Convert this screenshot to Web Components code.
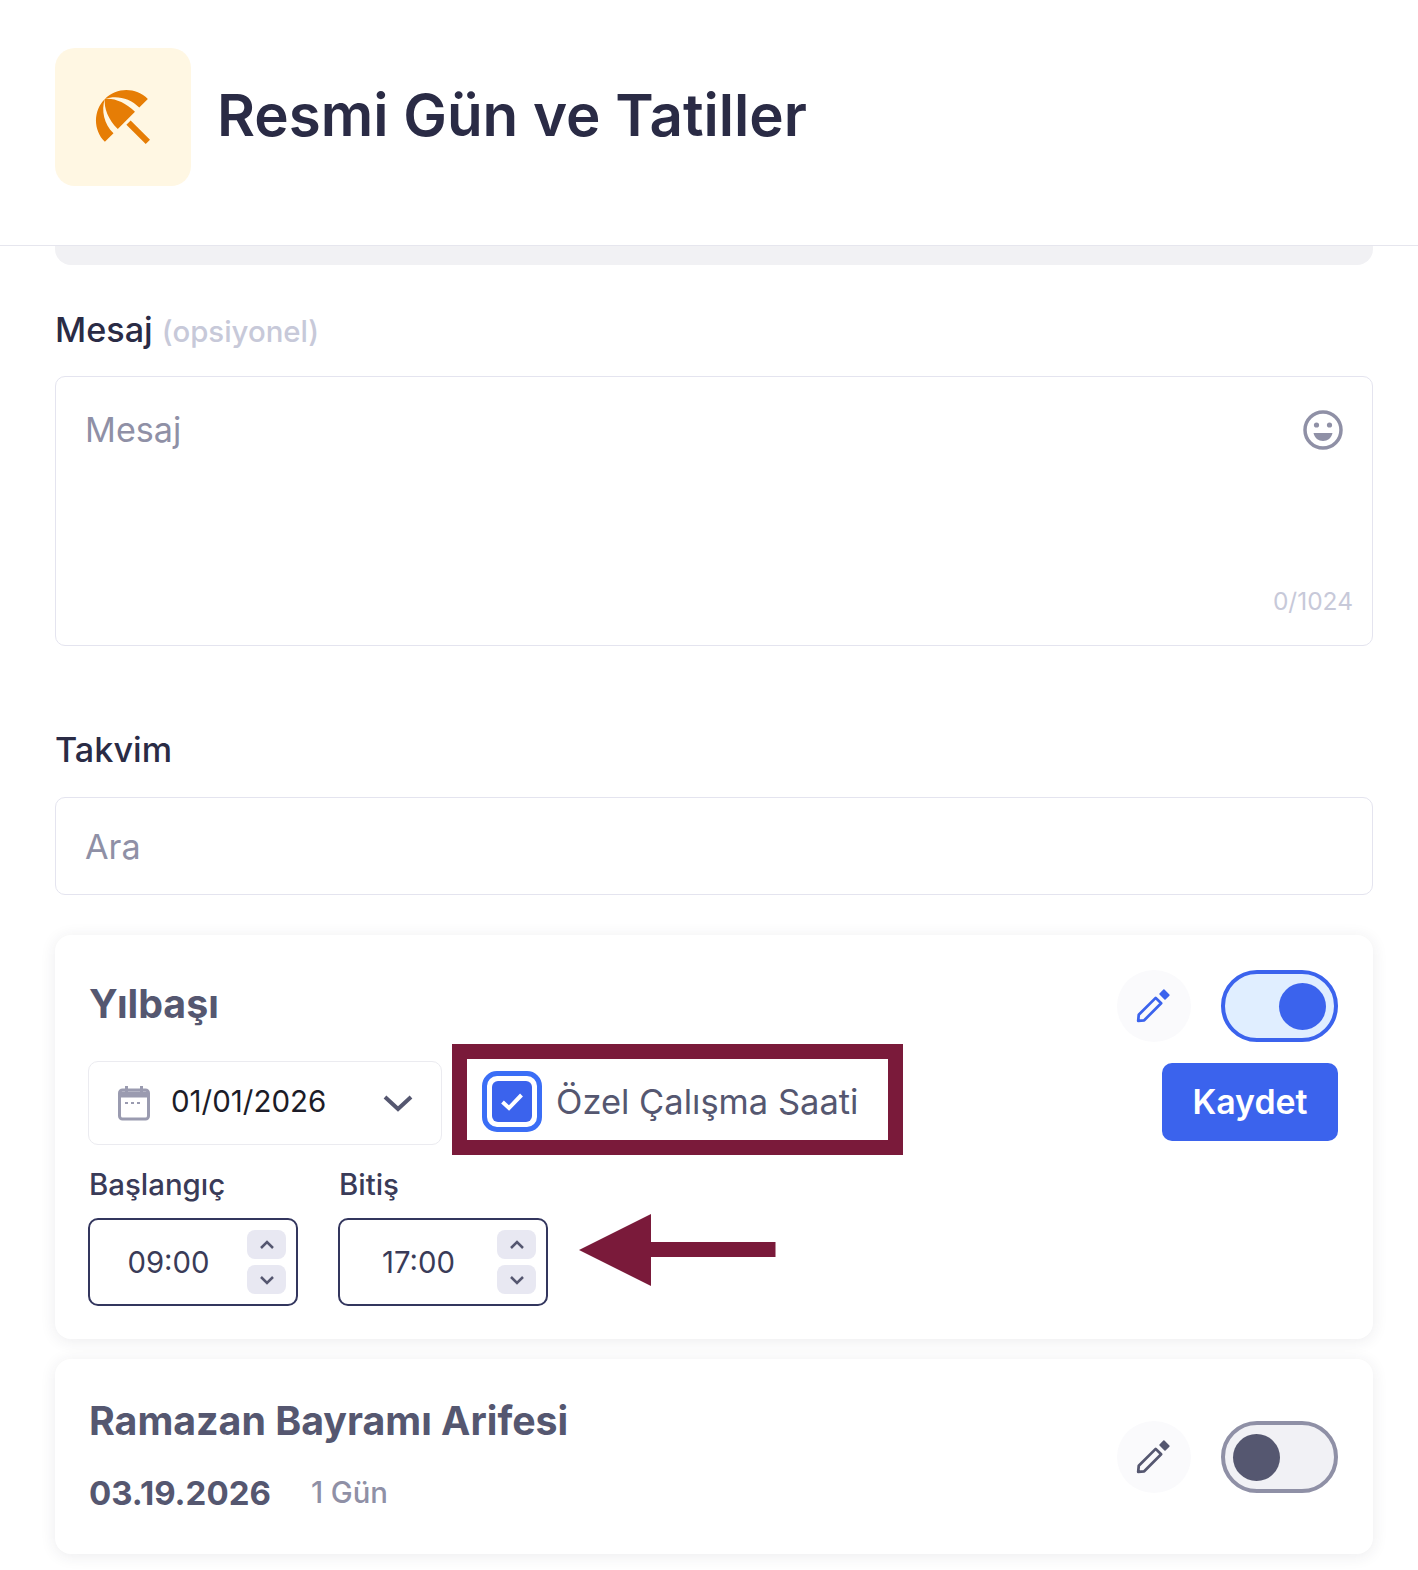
<!DOCTYPE html>
<html lang="tr">
<head>
<meta charset="utf-8">
<title>Resmi Gün ve Tatiller</title>
<style>
  html, body{ margin: 0; background: #fff; }
  body{ font-family: Inter, "Liberation Sans", sans-serif; color: #2a2b45; height: 1570px; overflow: hidden; }
</style>
</head>
<body>
<page-header title="Resmi Gün ve Tatiller"></page-header>
<page-content>
  <text-area-field label="Mesaj" hint="(opsiyonel)" placeholder="Mesaj" counter="0/1024"></text-area-field>
  <search-field label="Takvim" placeholder="Ara"></search-field>
  <holiday-card name="Yılbaşı" active editing>
    <date-select value="01/01/2026" slot="date"></date-select>
    <check-field label="Özel Çalışma Saati" slot="check"></check-field>
    <time-field label="Başlangıç" value="09:00" slot="times"></time-field>
    <time-field label="Bitiş" value="17:00" slot="times"></time-field>
  </holiday-card>
  <holiday-card name="Ramazan Bayramı Arifesi" date="03.19.2026" days="1 Gün"></holiday-card>
</page-content>

<script>
class PageHeader extends HTMLElement{
  constructor(){
    super()
    this.attachShadow({mode: 'open'})
  }

  connectedCallback(){
    this.shadowRoot.innerHTML = `
      <style>
        :host{
          display: flex;
          align-items: flex-start;
          height: 246px;
          padding: 48px 0 0 55px;
          box-sizing: border-box;
          border-bottom: 1px solid #e6e6ee;
        }
        #icon{
          width: 136px;
          height: 138px;
          border-radius: 20px;
          background: #fff7e3;
          display: flex;
          align-items: center;
          justify-content: center;
        }
        h1{
          margin: 32px 0 0 26px;
          font-size: 58.300px;
          line-height: 70px;
          font-weight: 600;
          color: #2a2b45;
        }
      </style>
      <div id="icon">
        <svg width="72" height="72" viewBox="0 0 24 24" fill="#e67d05"><path d="M13.127 14.56l1.43-1.43 6.44 6.443L19.57 21zm4.293-5.73l2.86-2.86c-3.95-3.95-10.35-3.96-14.3-.02 3.93-1.3 8.31-.25 11.44 2.88zM5.95 5.98c-3.94 3.95-3.93 10.35.02 14.3l2.86-2.86C5.7 14.29 4.65 9.91 5.95 5.98zm.02-.02l-.01.01c-.38 3.01 1.17 6.88 4.3 10.02l5.73-5.73c-3.13-3.13-7.01-4.68-10.02-4.3z"/></svg>
      </div>
      <h1>${this.getAttribute('title')}</h1>
    `
  }
}

class PageContent extends HTMLElement{
  constructor(){
    super()
    this.attachShadow({mode: 'open'})
  }

  connectedCallback(){
    this.shadowRoot.innerHTML = `
      <style>
        :host{
          display: block;
          padding: 0 45px 0 55px;
        }
        #strip{
          height: 19px;
          background: #f1f1f4;
          border-radius: 0 0 16px 16px;
        }
      </style>
      <div id="strip"></div>
      <slot></slot>
    `
  }
}

class TextAreaField extends HTMLElement{
  constructor(){
    super()
    this.attachShadow({mode: 'open'})
  }

  connectedCallback(){
    this.shadowRoot.innerHTML = `
      <style>
        :host{
          display: block;
          padding-top: 44px;
        }
        label{
          display: block;
          font-size: 34.200px;
          line-height: 42px;
          font-weight: 500;
          color: #2a2b45;
          margin-bottom: 23px;
        }
        label span{
          font-size: 29.400px;
          color: #c7c9d9;
        }
        #box{
          box-sizing: border-box;
          height: 270px;
          border: 1px solid #e4e4ef;
          border-radius: 10px;
          padding: 30px 28px 29px 29px;
          display: flex;
          flex-direction: column;
          justify-content: space-between;
        }
        #top{
          display: flex;
          justify-content: space-between;
          align-items: center;
          font-size: 34.200px;
          line-height: 46px;
          color: #8f90a6;
        }
        #count{
          align-self: flex-end;
          margin-right: -9px;
          font-size: 24.500px;
          line-height: 30px;
          color: #c7c9d9;
        }
      </style>
      <label>${this.getAttribute('label')} <span>${this.getAttribute('hint')}</span></label>
      <div id="box">
        <div id="top">
          ${this.getAttribute('placeholder')}
          <svg width="42" height="42" viewBox="0 0 42 42" fill="none">
            <circle cx="21" cy="21" r="18" stroke="#8f90a6" stroke-width="3.5"/>
            <circle cx="14.5" cy="16" r="2.6" fill="#8f90a6"/>
            <circle cx="27.5" cy="16" r="2.6" fill="#8f90a6"/>
            <path d="M11.5 24h19c-1 5-5 8-9.500 8s-8.500-3-9.500-8z" fill="#8f90a6"/>
          </svg>
        </div>
        <div id="count">${this.getAttribute('counter')}</div>
      </div>
    `
  }
}

class SearchField extends HTMLElement{
  constructor(){
    super()
    this.attachShadow({mode: 'open'})
  }

  connectedCallback(){
    this.shadowRoot.innerHTML = `
      <style>
        :host{
          display: block;
          padding-top: 83px;
        }
        label{
          display: block;
          font-size: 34.200px;
          line-height: 42px;
          font-weight: 500;
          color: #2a2b45;
          margin-bottom: 26px;
        }
        #box{
          box-sizing: border-box;
          height: 98px;
          border: 1px solid #e4e4ef;
          border-radius: 10px;
          padding: 0 29px;
          display: flex;
          align-items: center;
          font-size: 34.200px;
          color: #8f90a6;
        }
      </style>
      <label>${this.getAttribute('label')}</label>
      <div id="box">${this.getAttribute('placeholder')}</div>
    `
  }
}

class HolidayCard extends HTMLElement{
  constructor(){
    super()
    this.attachShadow({mode: 'open'})
  }

  connectedCallback(){
    const editing = this.hasAttribute('editing')
    this.shadowRoot.innerHTML = `
      <style>
        :host{
          display: block;
          position: relative;
          margin-top: 20px;
          padding: 37px 35px 36px 33px;
          border-radius: 16px;
          background: #fff;
          box-shadow: 0 2px 16px rgba(40,41,61,0.09);
        }
        :host([editing]){
          margin-top: 40px;
          padding-top: 35px;
          padding-bottom: 33px;
        }
        :host([editing]) h2{
          margin-top: -4px;
        }
        #head{
          display: flex;
          justify-content: space-between;
          align-items: center;
        }
        h2{
          margin: 0 0 0 1px;
          font-size: 39.300px;
          line-height: 50px;
          font-weight: 700;
          color: #555770;
        }
        #actions{
          display: flex;
          align-items: center;
          gap: 30px;
        }
        #meta{
          display: flex;
          align-items: center;
          gap: 40px;
          margin: 22px 0 0 1px;
          color: #555770;
          font-size: 33px;
          line-height: 50px;
          font-weight: 700;
        }
        #meta span{
          font-size: 29.300px;
          font-weight: 500;
          color: #8f90a6;
        }
        #row{
          display: flex;
          align-items: center;
          margin-top: 19px;
          gap: 40px;
        }
        #row button{
          margin: 0 0 3px auto;
          width: 176px;
          height: 78px;
          border: 0;
          border-radius: 10px;
          background: #3b63ed;
          color: #fff;
          font: 600 33.900px Inter, sans-serif;
        }
        #times{
          display: flex;
          gap: 40px;
          margin-top: 22px;
        }
        #note{
          position: absolute;
          left: 397px;
          top: 109px;
          width: 451px;
          height: 111px;
          box-sizing: border-box;
          border: 15px solid #7a1a3a;
        }
        #arrow{
          position: absolute;
          left: 524px;
          top: 278px;
        }
      </style>
      <div id="head">
        <div>
          <h2>${this.getAttribute('name')}</h2>
          ${editing ? '' : `<div id="meta">${this.getAttribute('date')}<span>${this.getAttribute('days')}</span></div>`}
        </div>
        <div id="actions">
          <edit-button ${this.hasAttribute('active') ? 'active' : ''}></edit-button>
          <toggle-switch ${this.hasAttribute('active') ? 'checked' : ''}></toggle-switch>
        </div>
      </div>
      ${editing ? `
      <div id="row">
        <slot name="date"></slot>
        <slot name="check"></slot>
        <button>Kaydet</button>
      </div>
      <div id="times"><slot name="times"></slot></div>
      <div id="note"></div>
      <svg id="arrow" width="197" height="74" viewBox="0 0 197 74"><path d="M0 37 72 1V29H196.500V44H72V73z" fill="#7a1a3a"/></svg>
      ` : ''}
    `
  }
}

class EditButton extends HTMLElement{
  constructor(){
    super()
    this.attachShadow({mode: 'open'})
  }

  connectedCallback(){
    this.shadowRoot.innerHTML = `
      <style>
        :host{
          display: flex;
          align-items: center;
          justify-content: center;
          width: 74px;
          height: 72px;
          border-radius: 50%;
          background: #fafafc;
          color: #555770;
        }
        :host([active]){
          color: #3b63ed;
        }
        svg{
          margin: 0 2px 2px 0;
        }
      </style>
      <svg width="35" height="35" viewBox="0 0 32 32" fill="none" stroke="currentColor" stroke-width="2.500" stroke-linejoin="round">
        <path d="M2 30 2.500 24.500 18 9 23 14 7.500 29.500z"/>
        <path d="M22 5.500 25.500 2 30 6.500 26.500 10z" fill="currentColor" stroke-width="1.500"/>
      </svg>
    `
  }
}

class ToggleSwitch extends HTMLElement{
  constructor(){
    super()
    this.attachShadow({mode: 'open'})
  }

  connectedCallback(){
    this.shadowRoot.innerHTML = `
      <style>
        :host{
          display: flex;
          align-items: center;
          box-sizing: border-box;
          width: 117px;
          height: 72px;
          padding: 0 8px;
          border: 4px solid #8f90a6;
          border-radius: 36px;
          background: #f1f1f5;
        }
        :host([checked]){
          justify-content: flex-end;
          border-color: #3b63ed;
          background: #e0eeff;
        }
        #knob{
          width: 47px;
          height: 47px;
          border-radius: 50%;
          background: #555770;
        }
        :host([checked]) #knob{
          background: #3b63ed;
        }
      </style>
      <div id="knob"></div>
    `
  }
}

class DateSelect extends HTMLElement{
  constructor(){
    super()
    this.attachShadow({mode: 'open'})
  }

  connectedCallback(){
    this.shadowRoot.innerHTML = `
      <style>
        :host{
          display: flex;
          align-items: center;
          box-sizing: border-box;
          width: 354px;
          height: 84px;
          padding: 0 28px 0 29px;
          border: 1px solid #ebebf0;
          border-radius: 10px;
          font-size: 29.500px;
          color: #1c1c28;
        }
        span{
          margin: 0 auto 0 21px;
          padding-bottom: 4px;
        }
      </style>
      <svg width="32" height="36" viewBox="0 0 32 36" fill="none" stroke="#9a9bb0" stroke-width="3">
        <rect x="1.500" y="5" width="29" height="29" rx="3"/>
        <path d="M1.500 7h29v5h-29z" fill="#9a9bb0" stroke-width="1"/>
        <path d="M8.500 1v6M23.500 1v6"/>
        <path d="M7 18h18" stroke-dasharray="3 3" stroke-width="2.200"/>
      </svg>
      <span>${this.getAttribute('value')}</span>
      <svg width="30" height="18" viewBox="0 0 30 18" fill="none" stroke="#555770" stroke-width="4"><path d="M2 3l13 12L28 3"/></svg>
    `
  }
}

class CheckField extends HTMLElement{
  constructor(){
    super()
    this.attachShadow({mode: 'open'})
  }

  connectedCallback(){
    this.shadowRoot.innerHTML = `
      <style>
        :host{
          display: flex;
          align-items: center;
          gap: 14px;
          font-size: 34.500px;
          color: #555770;
        }
        #outer{
          box-sizing: border-box;
          width: 60px;
          height: 61px;
          margin-bottom: 3px;
          padding: 5px;
          border: 5px solid #3b6ef6;
          border-radius: 15px;
        }
        #inner{
          height: 100%;
          border-radius: 6px;
          background: #3b63ed;
          display: flex;
          align-items: center;
          justify-content: center;
        }
        span{
          padding-bottom: 4px;
        }
      </style>
      <div id="outer">
        <div id="inner">
          <svg width="24" height="20" viewBox="0 0 24 20" fill="none" stroke="#fff" stroke-width="4"><path d="M2.500 10l6.500 6L21.500 3"/></svg>
        </div>
      </div>
      <span>${this.getAttribute('label')}</span>
    `
  }
}

class TimeField extends HTMLElement{
  constructor(){
    super()
    this.attachShadow({mode: 'open'})
  }

  connectedCallback(){
    this.shadowRoot.innerHTML = `
      <style>
        :host{
          display: block;
          width: 210px;
        }
        label{
          display: block;
          margin: 0 0 15px 1px;
          font-size: 29.400px;
          line-height: 36px;
          font-weight: 500;
          color: #3a3b58;
        }
        #box{
          box-sizing: border-box;
          height: 88px;
          padding: 10px 10px 10px 0;
          border: 2px solid #33365e;
          border-radius: 10px;
          display: flex;
          align-items: center;
          font-size: 29.300px;
          color: #3a3b58;
        }
        #value{
          flex: 1;
          text-align: center;
        }
        #steps{
          display: flex;
          flex-direction: column;
          gap: 6px;
        }
        #steps div{
          width: 39px;
          height: 29px;
          border-radius: 8px;
          background: #e8e8f2;
          display: flex;
          align-items: center;
          justify-content: center;
        }
      </style>
      <label>${this.getAttribute('label')}</label>
      <div id="box">
        <div id="value">${this.getAttribute('value')}</div>
        <div id="steps">
          <div><svg width="16" height="10" viewBox="0 0 16 10" fill="none" stroke="#555770" stroke-width="2.500"><path d="M2 8l6-6 6 6"/></svg></div>
          <div><svg width="16" height="10" viewBox="0 0 16 10" fill="none" stroke="#555770" stroke-width="2.500"><path d="M2 2l6 6 6-6"/></svg></div>
        </div>
      </div>
    `
  }
}

customElements.define('page-header', PageHeader)
customElements.define('page-content', PageContent)
customElements.define('text-area-field', TextAreaField)
customElements.define('search-field', SearchField)
customElements.define('holiday-card', HolidayCard)
customElements.define('edit-button', EditButton)
customElements.define('toggle-switch', ToggleSwitch)
customElements.define('date-select', DateSelect)
customElements.define('check-field', CheckField)
customElements.define('time-field', TimeField)
</script>
</body>
</html>
